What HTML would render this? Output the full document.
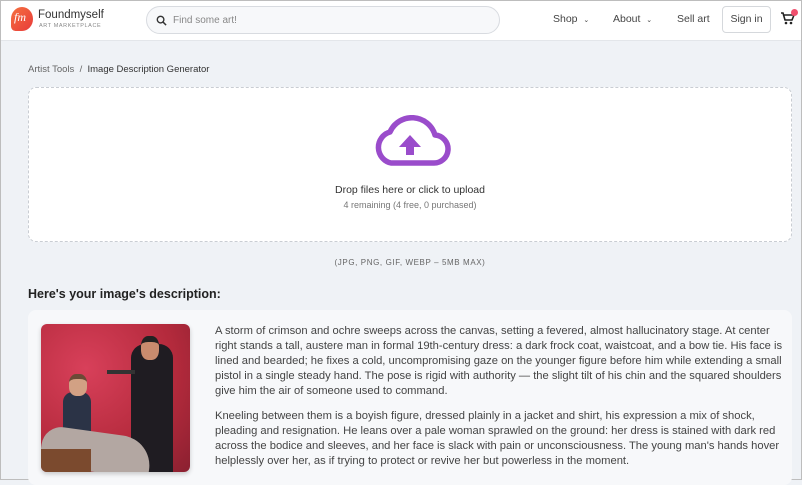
<!DOCTYPE html>
<html><head><meta charset="utf-8"><style>
*{box-sizing:border-box;margin:0;padding:0}
body{width:802px;height:480px;overflow:hidden;background:#eff2f6;font-family:"Liberation Sans",sans-serif;color:#333;position:relative;border:1px solid #bdbdbd}
.hdr{position:absolute;left:0;top:0;width:800px;height:40px;background:#fff;border-bottom:1px solid #e3e6ea}
.logo{position:absolute;left:10px;top:6px;width:22px;height:24px;border-radius:50% 50% 50% 20%;background:linear-gradient(135deg,#f5713f,#e83a3a)}
.logo span{position:absolute;left:3px;top:3px;color:#fff;font:italic 12px "Liberation Serif",serif}
.brand{position:absolute;left:37px;top:8px;font-size:11.5px;color:#333}
.sub{position:absolute;left:38px;top:22px;font-size:5.5px;letter-spacing:.6px;color:#888}
.search{position:absolute;left:145px;top:5px;width:354px;height:28px;border:1px solid #d8dbe0;border-radius:14px;background:#f7f8fa}
.search .ph{position:absolute;left:26px;top:8px;font-size:10px;color:#888}
.nav{position:absolute;top:12px;font-size:10.5px;color:#444}
.btn{position:absolute;left:721px;top:5px;width:49px;height:27px;border:1px solid #d5d8dc;border-radius:4px;font-size:10.5px;color:#444;text-align:center;line-height:25px}
.crumb{position:absolute;left:27px;top:63px;font-size:9.5px;color:#666}
.crumb b{font-weight:normal;color:#333}
.up{position:absolute;left:27px;top:86px;width:764px;height:155px;background:#fff;border:1px dashed #c9cdd3;border-radius:8px}
.c{position:absolute;width:100%;text-align:center}
h2{position:absolute;left:27px;top:286px;font-size:12.5px;color:#222}
.card{position:absolute;left:27px;top:309px;width:764px;height:175px;background:#f7f8fa;border-radius:8px}
.img{position:absolute;left:13px;top:14px;width:149px;height:148px;border-radius:6px;overflow:hidden;background:radial-gradient(ellipse at 30% 30%,#d8405a,#b42a3c 60%,#8a2030);box-shadow:0 2px 5px rgba(0,0,0,.2)}
.txt{position:absolute;left:187px;top:14px;font-size:11.2px;line-height:15px;color:#444;white-space:nowrap}
.txt p{margin-bottom:10px}
</style></head><body>
<div class="hdr">
 <div class="logo"><span>fm</span></div>
 <div class="brand">Foundmyself</div><div class="sub">ART MARKETPLACE</div>
 <div class="search"><svg style="position:absolute;left:9px;top:8px" width="11" height="11" viewBox="0 0 12 12"><circle cx="5" cy="5" r="3.6" fill="none" stroke="#333" stroke-width="1.5"/><path d="M7.7 7.7L11 11" stroke="#333" stroke-width="1.6"/></svg><div class="ph">Find some art!</div></div>
 <div class="nav" style="left:552px">Shop &nbsp;<span style="font-size:7px">&#8964;</span></div>
 <div class="nav" style="left:612px">About &nbsp;<span style="font-size:7px">&#8964;</span></div>
 <div class="nav" style="left:676px">Sell art</div>
 <div class="btn">Sign in</div>
 <svg style="position:absolute;left:779px;top:9px" width="16" height="16" viewBox="0 0 16 16"><path d="M1 3h2l2 7h7l2-5H4" fill="none" stroke="#222" stroke-width="1.6"/><circle cx="6" cy="13" r="1.3" fill="#222"/><circle cx="11" cy="13" r="1.3" fill="#222"/></svg>
 <div style="position:absolute;left:790px;top:8px;width:7px;height:7px;border-radius:50%;background:#f0506e"></div>
</div>
<div class="crumb">Artist Tools &nbsp;/ &nbsp;<b>Image Description Generator</b></div>
<div class="up">
 <svg style="position:absolute;left:344px;top:27px" width="78" height="52" viewBox="0 0 78 52"><path d="M18 48H60A14 14 0 0 0 62 20A24 24 0 0 0 17 17A16 16 0 0 0 18 48Z" fill="none" stroke="#9a4ccb" stroke-width="5.5" stroke-linejoin="round"/><path d="M37 20L26 32H33V40H41V32H48Z" fill="#9a4ccb"/></svg>
 <div class="c" style="top:96px;font-size:10.5px;color:#333">Drop files here or click to upload</div>
 <div class="c" style="top:112px;font-size:9px;color:#777">4 remaining (4 free, 0 purchased)</div>
</div>
<div class="c" style="left:0;top:257px;width:818px;font-size:8px;letter-spacing:.6px;color:#666">(JPG, PNG, GIF, WEBP – 5MB MAX)</div>
<h2>Here's your image's description:</h2>
<div class="card">
 <div class="img">
  <div style="position:absolute;left:90px;top:20px;width:42px;height:128px;background:#1f1c22;border-radius:14px 14px 0 0"></div>
  <div style="position:absolute;left:100px;top:12px;width:18px;height:24px;background:#c98b6e;border-radius:40%;border-top:6px solid #222"></div>
  <div style="position:absolute;left:66px;top:46px;width:28px;height:4px;background:#333"></div>
  <div style="position:absolute;left:22px;top:68px;width:28px;height:64px;background:#2b3346;border-radius:10px 10px 0 0"></div>
  <div style="position:absolute;left:28px;top:50px;width:18px;height:22px;background:#d2a184;border-radius:40%;border-top:5px solid #6b4a36"></div>
  <div style="position:absolute;left:0;top:108px;width:110px;height:40px;background:#b3a7a2;border-radius:20px 30px 0 0;transform:rotate(8deg)"></div>
  <div style="position:absolute;left:0;top:125px;width:50px;height:25px;background:#7b4a2e"></div>
 </div>
 <div class="txt">
  <p>A storm of crimson and ochre sweeps across the canvas, setting a fevered, almost hallucinatory stage. At center<br>right stands a tall, austere man in formal 19th-century dress: a dark frock coat, waistcoat, and a bow tie. His face is<br>lined and bearded; he fixes a cold, uncompromising gaze on the younger figure before him while extending a small<br>pistol in a single steady hand. The pose is rigid with authority — the slight tilt of his chin and the squared shoulders<br>give him the air of someone used to command.</p>
  <p>Kneeling between them is a boyish figure, dressed plainly in a jacket and shirt, his expression a mix of shock,<br>pleading and resignation. He leans over a pale woman sprawled on the ground: her dress is stained with dark red<br>across the bodice and sleeves, and her face is slack with pain or unconsciousness. The young man's hands hover<br>helplessly over her, as if trying to protect or revive her but powerless in the moment.</p>
 </div>
</div>
</body></html>
